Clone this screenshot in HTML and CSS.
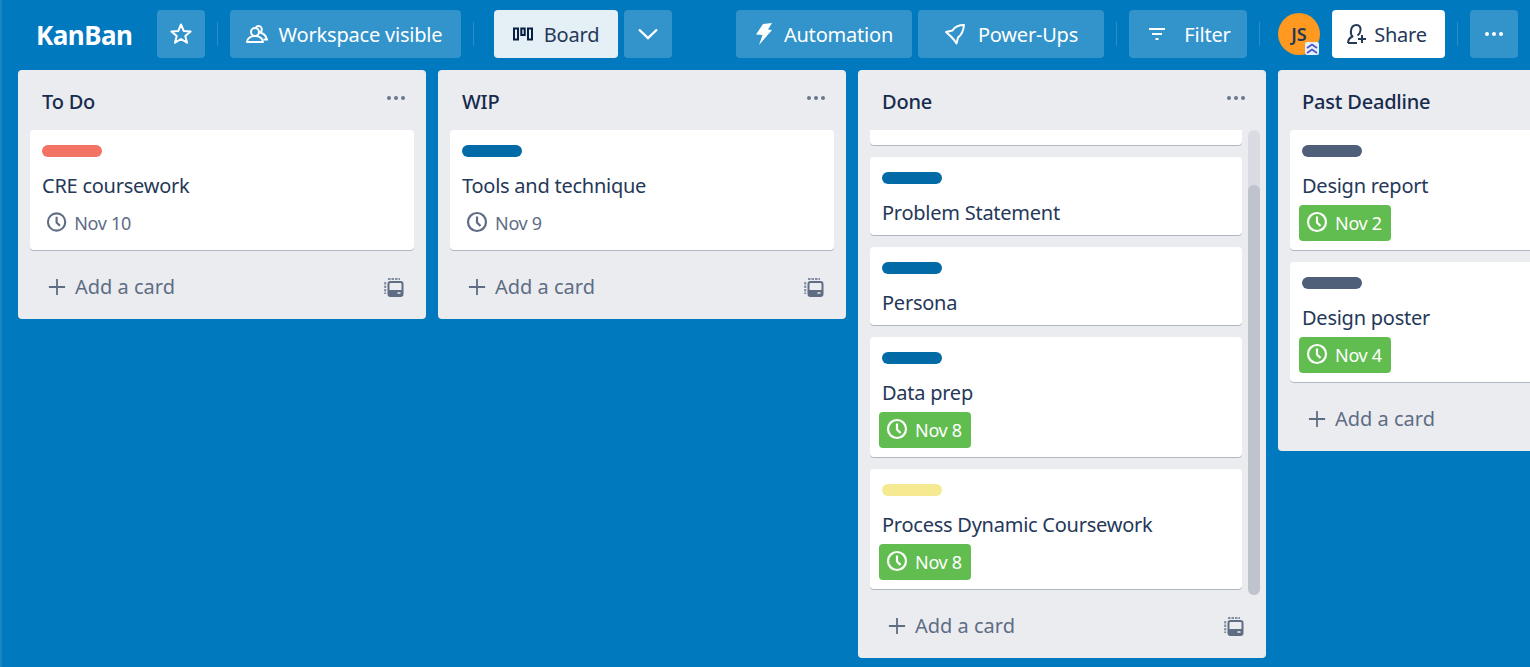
FILE: index.html
```html
<!DOCTYPE html>
<html>
<head>
	<title>KanBan</title>
	<link rel="stylesheet" href="styles.css">
</head>
<body>
	<svg class="defs" width="0" height="0">
		<symbol id="clock" viewBox="0 0 22 22">
			<circle cx="11" cy="11" r="9" fill="none" stroke="currentColor" stroke-width="2.2"/>
			<path d="M11 5.500V11.500L14.500 15" fill="none" stroke="currentColor" stroke-width="2.2"/>
		</symbol>
		<symbol id="plus" viewBox="0 0 20 20">
			<path d="M10 1V19M1 10H19" fill="none" stroke="currentColor" stroke-width="2"/>
		</symbol>
		<symbol id="template" viewBox="0 0 20 20">
			<path d="M4 2H16M1.200 5V17" fill="none" stroke="currentColor" stroke-width="2" stroke-dasharray="2.500 1" opacity="0.75"/>
			<rect x="4.500" y="5" width="14" height="14" rx="2" fill="none" stroke="currentColor" stroke-width="2"/>
			<path d="M4.500 13H18.500V17A2 2 0 0 1 16.500 19H6.500A2 2 0 0 1 4.500 17Z" fill="currentColor"/>
			<path d="M13.500 16H16.500" stroke="#ebecf0" stroke-width="1.500"/>
		</symbol>
		<symbol id="dots" viewBox="0 0 20 6">
			<circle cx="3" cy="3" r="2"/><circle cx="10" cy="3" r="2"/><circle cx="17" cy="3" r="2"/>
		</symbol>
	</svg>

	<header class="topbar">
		<h1 class="board-name">KanBan</h1>
		<button class="btn btn-square star-btn">
			<svg width="24" height="24" viewBox="0 0 24 24"><path d="M12 2.500L14.700 8.900L21.600 9.400L16.300 13.900L18 20.700L12 17L6 20.700L7.700 13.900L2.400 9.400L9.300 8.900Z" fill="none" stroke="currentColor" stroke-width="2" stroke-linejoin="round"/></svg>
		</button>
		<span class="sep"></span>
		<button class="btn workspace-btn">
			<svg width="22" height="18" viewBox="0 0 22 18"><circle cx="9" cy="7" r="4" fill="none" stroke="currentColor" stroke-width="2"/><path d="M10 2.500C11 0.500 14.500 0.500 15.500 3C16.300 5 15.500 6.500 14.500 7.500C17.500 8.500 20 11 21 14.500H17.500" fill="none" stroke="currentColor" stroke-width="2"/><path d="M1 17C1 13.500 4.500 11 9 11C13.500 11 17 13.500 17 17Z" fill="none" stroke="currentColor" stroke-width="2" stroke-linejoin="round"/></svg>
			Workspace visible
		</button>
		<span class="sep sep-board"></span>
		<button class="btn btn-light board-btn">
			<svg width="20" height="14" viewBox="0 0 20 14"><path d="M1 1.500H5V12.500H1ZM8.300 1.500H11.700V8H8.300ZM15 1.500H19V12.500H15Z" fill="none" stroke="currentColor" stroke-width="2"/></svg>
			Board
		</button>
		<button class="btn btn-square chevron-btn">
			<svg width="22" height="14" viewBox="0 0 22 14"><path d="M2 2.500L11 11L20 2.500" fill="none" stroke="currentColor" stroke-width="2.400"/></svg>
		</button>
		<div class="spacer"></div>
		<button class="btn automation-btn">
			<svg width="18" height="24" viewBox="0 0 18 24"><path d="M8 2L17 1L13 7.500L17 8L4 23L7.500 13L1 12.500Z" fill="currentColor"/></svg>
			Automation
		</button>
		<button class="btn powerups-btn">
			<svg width="22" height="22" viewBox="0 0 22 22"><path d="M20 2C14.500 2 11 3.500 8.500 7.500L2 9L7 13.500L10.500 17.500L12.500 20.500L14 14.500C18 11.500 19.500 7.500 20 2Z" fill="none" stroke="currentColor" stroke-width="2" stroke-linejoin="round"/></svg>
			Power-Ups
		</button>
		<span class="sep"></span>
		<button class="btn filter-btn">
			<svg width="18" height="14" viewBox="0 0 18 14"><path d="M1 2H17M4 7H14M7.500 12H10.500" fill="none" stroke="currentColor" stroke-width="2"/></svg>
			Filter
		</button>
		<span class="sep"></span>
		<div class="avatar">JS
			<svg class="avatar-badge" width="14" height="13" viewBox="0 0 14 13"><rect width="14" height="13" rx="2" fill="#e4f0f6"/><path d="M2 6L7 2.500L12 6M2 11L7 7.500L12 11" fill="none" stroke="#4a55c8" stroke-width="1.800"/></svg>
		</div>
		<button class="btn btn-white share-btn">
			<svg width="22" height="22" viewBox="0 0 22 22"><path d="M2 20C2 16 4 14.500 6.500 13.500C5 12 4.500 10 5 7.500C5.500 4 8 2 10.500 2C13.500 2 15 4.500 14.500 7.500C14.200 10 13 11.500 11.500 12.500M2 20H11" fill="none" stroke="currentColor" stroke-width="2" stroke-linejoin="round"/><path d="M16 12V20M12 16H20" fill="none" stroke="currentColor" stroke-width="2"/></svg>
			Share
		</button>
		<span class="sep"></span>
		<button class="btn btn-square more-btn">
			<svg width="24" height="6" viewBox="0 0 20 6" fill="currentColor"><use href="#dots"/></svg>
		</button>
	</header>

	<main class="board">
		<section class="list">
			<div class="list-head"><h2>To Do</h2><svg class="list-menu" width="20" height="6"><use href="#dots"/></svg></div>
			<div class="cards">
				<article class="card">
					<span class="label label-red"></span>
					<p class="card-title">CRE coursework</p>
					<span class="date"><svg width="22" height="22"><use href="#clock"/></svg>Nov 10</span>
				</article>
			</div>
			<div class="list-foot">
				<span class="add"><svg width="18" height="18"><use href="#plus"/></svg>Add a card</span>
				<svg class="tpl" width="20" height="20"><use href="#template"/></svg>
			</div>
		</section>

		<section class="list">
			<div class="list-head"><h2>WIP</h2><svg class="list-menu" width="20" height="6"><use href="#dots"/></svg></div>
			<div class="cards">
				<article class="card">
					<span class="label label-blue"></span>
					<p class="card-title">Tools and technique</p>
					<span class="date"><svg width="22" height="22"><use href="#clock"/></svg>Nov 9</span>
				</article>
			</div>
			<div class="list-foot">
				<span class="add"><svg width="18" height="18"><use href="#plus"/></svg>Add a card</span>
				<svg class="tpl" width="20" height="20"><use href="#template"/></svg>
			</div>
		</section>

		<section class="list">
			<div class="list-head"><h2>Done</h2><svg class="list-menu" width="20" height="6"><use href="#dots"/></svg></div>
			<div class="scroll-row">
				<div class="cards cards-scroll">
					<article class="card card-cut"></article>
					<article class="card">
						<span class="label label-blue"></span>
						<p class="card-title">Problem Statement</p>
					</article>
					<article class="card">
						<span class="label label-blue"></span>
						<p class="card-title">Persona</p>
					</article>
					<article class="card">
						<span class="label label-blue"></span>
						<p class="card-title">Data prep</p>
						<span class="date date-done"><svg width="22" height="22"><use href="#clock"/></svg>Nov 8</span>
					</article>
					<article class="card">
						<span class="label label-yellow"></span>
						<p class="card-title">Process Dynamic Coursework</p>
						<span class="date date-done"><svg width="22" height="22"><use href="#clock"/></svg>Nov 8</span>
					</article>
				</div>
				<div class="scrollbar"><div class="thumb"></div></div>
			</div>
			<div class="list-foot">
				<span class="add"><svg width="18" height="18"><use href="#plus"/></svg>Add a card</span>
				<svg class="tpl" width="20" height="20"><use href="#template"/></svg>
			</div>
		</section>

		<section class="list">
			<div class="list-head"><h2>Past Deadline</h2></div>
			<div class="cards">
				<article class="card">
					<span class="label label-dark"></span>
					<p class="card-title">Design report</p>
					<span class="date date-done"><svg width="22" height="22"><use href="#clock"/></svg>Nov 2</span>
				</article>
				<article class="card">
					<span class="label label-dark"></span>
					<p class="card-title">Design poster</p>
					<span class="date date-done"><svg width="22" height="22"><use href="#clock"/></svg>Nov 4</span>
				</article>
			</div>
			<div class="list-foot">
				<span class="add"><svg width="18" height="18"><use href="#plus"/></svg>Add a card</span>
			</div>
		</section>
	</main>
</body>
</html>
```

FILE: styles.css
```css
html, body {
	height: 100%;
}
body {
	margin: 0;
	background-color: #0079bf;
	box-shadow: inset 2px 0 0 #1a85c5;
	font-family: "Noto Sans", "Open Sans", sans-serif;
	color: #172b4d;
	overflow: hidden;
}
.defs {
	position: absolute;
}

/* barra do topo */
.topbar {
	display: flex;
	align-items: center;
	height: 48px;
	padding: 10px 12px 12px 36px;
}
.board-name {
	margin: 2px 25px 0 0;
	width: 96px;
	font-size: 26px;
	font-weight: 700;
	letter-spacing: -0.5px;
	color: white;
}
.btn {
	display: flex;
	align-items: center;
	justify-content: center;
	gap: 11px;
	height: 48px;
	padding: 0;
	border: none;
	border-radius: 4px;
	background-color: rgba(255, 255, 255, 0.2);
	color: white;
	font-family: inherit;
	font-size: 20px;
	letter-spacing: -0.2px;
}
.btn-square {
	width: 48px;
	flex: none;
}
.btn-light {
	background-color: #e4f0f6;
	color: #253858;
}
.btn-white {
	background-color: white;
	color: #253858;
}
.sep {
	width: 1px;
	height: 24px;
	margin: 0 12px;
	background-color: rgba(255, 255, 255, 0.16);
	flex: none;
}
.sep-board {
	margin-right: 20px;
}
.workspace-btn {
	width: 231px;
	padding-right: 3px;
}
.board-btn {
	width: 124px;
	margin-right: 6px;
}
.board-btn svg {
	color: #091e42;
}
.spacer {
	flex: 1;
}
.automation-btn {
	width: 176px;
	margin-right: 6px;
}
.powerups-btn {
	width: 186px;
	gap: 12px;
}
.filter-btn {
	width: 118px;
	padding-left: 3px;
	gap: 18px;
}
.avatar {
	position: relative;
	display: flex;
	align-items: center;
	justify-content: center;
	width: 42px;
	height: 42px;
	margin: 0 12px 0 6px;
	border-radius: 50%;
	background-color: #ff991f;
	font-size: 18px;
	font-weight: 600;
	color: #253858;
	flex: none;
}
.avatar-badge {
	position: absolute;
	right: 1px;
	bottom: 0;
}
.share-btn {
	width: 113px;
	padding-right: 4px;
	gap: 6px;
}

/* quadro */
.board {
	display: flex;
	align-items: flex-start;
	gap: 12px;
	padding-left: 18px;
}
.list {
	width: 408px;
	flex: none;
	background-color: #ebecf0;
	border-radius: 4px;
}
.list-head {
	display: flex;
	align-items: center;
	justify-content: space-between;
	height: 57px;
	padding: 3px 20px 0 24px;
}
.list-head h2 {
	margin: 0;
	font-size: 20px;
	font-weight: 500;
	letter-spacing: -0.2px;
}
.list-menu {
	fill: #6b778c;
	margin-bottom: 7px;
}
.cards {
	display: flex;
	flex-direction: column;
	gap: 12px;
	padding: 0 12px;
}
.card {
	display: flex;
	flex-direction: column;
	align-items: flex-start;
	padding: 15px 12px 0;
	background-color: white;
	border-radius: 4px;
	box-shadow: 0 1px 0 #b0b6c2;
}
.card-cut {
	height: 15px;
	padding: 0;
	border-radius: 0 0 4px 4px;
}
.label {
	width: 60px;
	height: 12px;
	border-radius: 6px;
}
.label-red {
	background-color: #f27363;
}
.label-blue {
	background-color: #026aa7;
}
.label-yellow {
	background-color: #f5ea92;
}
.label-dark {
	background-color: #505f79;
}
.card-title {
	margin: 15px 0 8px;
	font-size: 20px;
	line-height: 28px;
	letter-spacing: -0.25px;
	color: #253858;
}
.date {
	display: flex;
	align-items: center;
	gap: 7px;
	height: 36px;
	width: 92px;
	margin: -3px 0 9px -3px;
	box-sizing: border-box;
	padding-left: 7px;
	border-radius: 4px;
	font-size: 18px;
	letter-spacing: -0.3px;
	white-space: nowrap;
	color: #5e6c84;
}
.date svg {
	margin-top: -2px;
}
.date-done {
	background-color: #61bd4f;
	color: white;
}
.scroll-row {
	display: flex;
	align-items: flex-start;
}
.cards-scroll {
	width: 372px;
	padding-right: 6px;
}
.scrollbar {
	width: 12px;
	height: 465px;
	margin-bottom: -6px;
	padding-top: 55px;
	box-sizing: border-box;
	background-color: #dadbe2;
	border-radius: 6px;
}
.thumb {
	height: 410px;
	background-color: #bfc3cd;
	border-radius: 6px;
}
.list-foot {
	display: flex;
	align-items: center;
	justify-content: space-between;
	height: 65px;
	padding: 4px 22px 0 30px;
	color: #5e6c84;
}
.add {
	display: flex;
	align-items: center;
	gap: 9px;
	font-size: 20px;
}
```
